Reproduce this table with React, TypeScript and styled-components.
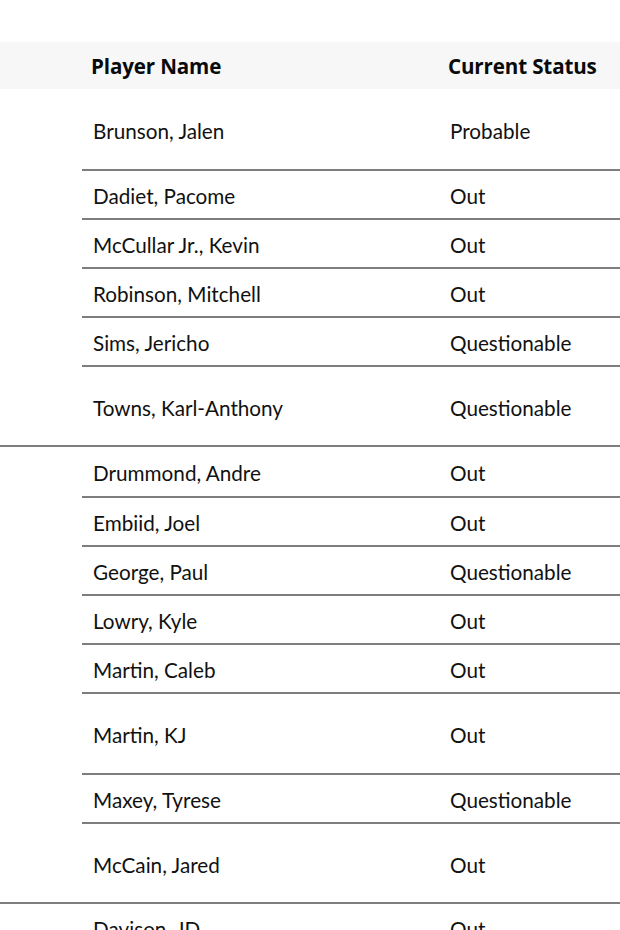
import styled, { createGlobalStyle } from 'styled-components';

const GlobalStyle = createGlobalStyle`
  html, body {
    margin: 0;
    padding: 0;
    background: #ffffff;
  }
  body {
    font-family: Lato, 'Open Sans', 'Liberation Sans', sans-serif;
    color: #111111;
    overflow: hidden;
  }
`;

type Player = { name: string; status: string; height: number };
type Team = { players: Player[] };

const teams: Team[] = [
  {
    players: [
      { name: 'Brunson, Jalen', status: 'Probable', height: 82 },
      { name: 'Dadiet, Pacome', status: 'Out', height: 49 },
      { name: 'McCullar Jr., Kevin', status: 'Out', height: 49 },
      { name: 'Robinson, Mitchell', status: 'Out', height: 49 },
      { name: 'Sims, Jericho', status: 'Questionable', height: 49 },
      { name: 'Towns, Karl-Anthony', status: 'Questionable', height: 80 },
    ],
  },
  {
    players: [
      { name: 'Drummond, Andre', status: 'Out', height: 51 },
      { name: 'Embiid, Joel', status: 'Out', height: 49 },
      { name: 'George, Paul', status: 'Questionable', height: 49 },
      { name: 'Lowry, Kyle', status: 'Out', height: 49 },
      { name: 'Martin, Caleb', status: 'Out', height: 49 },
      { name: 'Martin, KJ', status: 'Out', height: 81 },
      { name: 'Maxey, Tyrese', status: 'Questionable', height: 49 },
      { name: 'McCain, Jared', status: 'Out', height: 80 },
    ],
  },
  {
    players: [{ name: 'Davison, JD', status: 'Out', height: 49 }],
  },
];

const Page = styled.div`
  padding-top: 42px;
  width: 620px;
`;

const HeaderRow = styled.div`
  display: grid;
  grid-template-columns: 82px 357px 1fr;
  align-items: center;
  height: 47px;
  background: #f6f7f6;
`;

const HeaderCell = styled.div`
  padding-left: 9px;
  font-family: 'Open Sans', Lato, sans-serif;
  font-size: 20.6px;
  font-weight: 700;
  letter-spacing: -0.15px;
  white-space: nowrap;
  color: #0a0a0a;
`;

const TeamGroup = styled.div`
  display: grid;
  grid-template-columns: 82px 1fr;
  border-bottom: 2px solid #7e7e7e;
`;

const TeamCell = styled.div``;

const Rows = styled.div`
  display: flex;
  flex-direction: column;
`;

const Row = styled.div<{ $h: number; $last: boolean }>`
  display: grid;
  grid-template-columns: 357px 1fr;
  align-items: center;
  box-sizing: border-box;
  height: ${(p) => (p.$last ? p.$h - 2 : p.$h)}px;
  border-bottom: ${(p) => (p.$last ? 'none' : '2px solid #7e7e7e')};
`;

const Cell = styled.div`
  padding: 3px 0 0 11px;
  font-size: 20.7px;
  white-space: nowrap;
`;

export default function App() {
  return (
    <>
      <GlobalStyle />
      <Page>
        <HeaderRow>
          <div />
          <HeaderCell>Player Name</HeaderCell>
          <HeaderCell>Current Status</HeaderCell>
        </HeaderRow>
        {teams.map((team, ti) => (
          <TeamGroup key={ti}>
            <TeamCell />
            <Rows>
              {team.players.map((p, i) => (
                <Row key={p.name} $h={p.height} $last={i === team.players.length - 1}>
                  <Cell>{p.name}</Cell>
                  <Cell>{p.status}</Cell>
                </Row>
              ))}
            </Rows>
          </TeamGroup>
        ))}
      </Page>
    </>
  );
}
